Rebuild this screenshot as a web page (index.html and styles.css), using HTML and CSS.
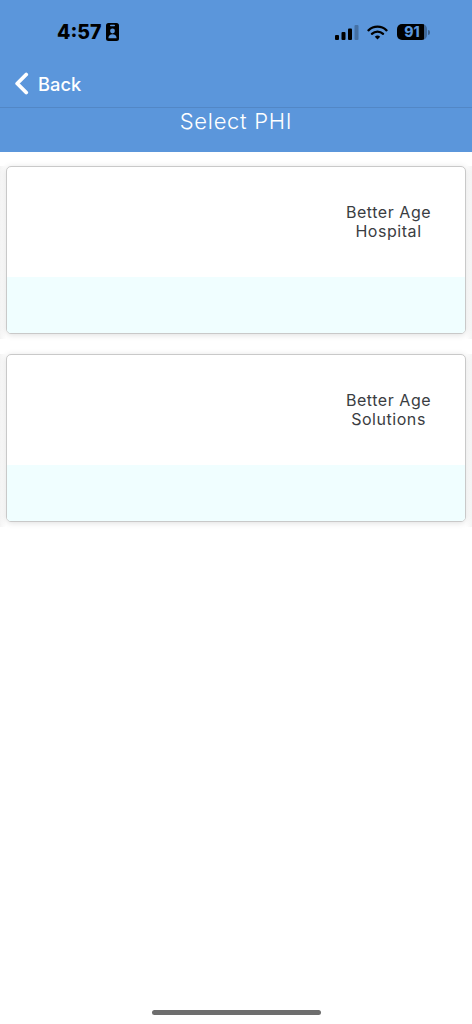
FILE: index.html
```html
<!DOCTYPE html>
<html lang="en">
<head>
  <meta charset="UTF-8">
  <meta name="viewport" content="width=device-width, initial-scale=1.0">
  <title>Select PHI</title>
  <link rel="stylesheet" href="styles.css">
</head>
<body>
  <div class="page">

    <!-- Blue header -->
    <header class="header">
      <div class="status-bar">
        <div class="status-left">
          <span class="clock">4:57</span>
          <svg class="badge-icon" width="13" height="18" viewBox="0 0 13 18">
            <rect x="0" y="0" width="13" height="18" rx="2.5" fill="#000"/>
            <rect x="4" y="1.8" width="5" height="1.5" rx="0.7" fill="#5b96db"/>
            <circle cx="6.5" cy="8" r="2.4" fill="#5b96db"/>
            <path d="M2.4 15.2c0-2.6 1.8-3.9 4.1-3.9s4.1 1.3 4.1 3.9z" fill="#5b96db"/>
          </svg>
        </div>
        <div class="status-right">
          <svg width="24" height="15" viewBox="0 0 24 15">
            <rect x="0" y="10" width="4" height="5" rx="1" fill="#000"/>
            <rect x="6.5" y="7" width="4" height="8" rx="1" fill="#000"/>
            <rect x="13" y="3.5" width="4" height="11.5" rx="1" fill="#000"/>
            <rect x="19.5" y="0" width="4" height="15" rx="1" fill="#000" opacity="0.25"/>
          </svg>
          <svg class="wifi-icon" width="21" height="15" viewBox="0 0 21 15">
            <path d="M1.5 5.3a13 13 0 0 1 18 0" fill="none" stroke="#000" stroke-width="2.3" stroke-linecap="round"/>
            <path d="M4.9 8.8a8.2 8.2 0 0 1 11.2 0" fill="none" stroke="#000" stroke-width="2.3" stroke-linecap="round"/>
            <path d="M7.8 11.7l2.7 2.9 2.7-2.9a3.9 3.9 0 0 0-5.4 0z" fill="#000"/>
          </svg>
          <div class="battery">
            <span class="battery-level">91</span>
            <span class="battery-cap"></span>
          </div>
        </div>
      </div>

      <div class="nav-row">
        <svg class="back-icon" width="15" height="23" viewBox="0 0 15 23">
          <path d="M12.2 2.5L3.2 11.5l9 9" fill="none" stroke="#fff" stroke-width="3.8" stroke-linecap="round" stroke-linejoin="round"/>
        </svg>
        <span class="back-label">Back</span>
      </div>

      <h1 class="title">Select PHI</h1>
    </header>

    <!-- Organisation cards -->
    <main class="card-list">
      <div class="card-wrap">
        <div class="card">
          <div class="card-top">
            <p class="card-name">Better Age<br>Hospital</p>
          </div>
          <div class="card-bottom"></div>
        </div>
      </div>
      <div class="card-wrap">
        <div class="card">
          <div class="card-top">
            <p class="card-name">Better Age<br>Solutions</p>
          </div>
          <div class="card-bottom"></div>
        </div>
      </div>
    </main>

    <div class="home-indicator"></div>
  </div>
</body>
</html>
```

FILE: styles.css
```css
/* General styles for the page */
body {
  margin: 0;
  background-color: #fff;
  font-family: Inter, "Liberation Sans", sans-serif;
}

.page {
  display: flex;
  flex-direction: column;
  height: 1024px;
  overflow: hidden;
}

/* Header */
.header {
  height: 152px;
  background-color: #5b96db;
  box-sizing: border-box;
}

.status-bar {
  display: flex;
  justify-content: space-between;
  align-items: center;
  height: 64px;
  padding: 0 42px 0 57px;
}

.status-left {
  display: flex;
  align-items: center;
  gap: 5px;
}

.clock {
  font-size: 19.5px;
  font-weight: 800;
  color: #000;
}

.status-right {
  display: flex;
  align-items: center;
  gap: 8px;
}

.wifi-icon {
  margin-right: 1px;
}

.battery {
  display: flex;
  align-items: center;
  gap: 1px;
}

.battery-level {
  width: 30px;
  height: 16px;
  border-radius: 5px;
  background: linear-gradient(to right, #000 90%, rgba(0, 0, 0, 0.3) 90%);
  color: #5b96db;
  font-size: 14px;
  font-weight: 800;
  line-height: 16px;
  text-align: center;
}

.battery-cap {
  width: 2px;
  height: 5px;
  border-radius: 0 2px 2px 0;
  background-color: rgba(0, 0, 0, 0.35);
}

.nav-row {
  display: flex;
  align-items: center;
  gap: 9px;
  height: 39px;
  padding: 0 0 4px 14px;
  border-bottom: 1px solid #5287c6;
}

.back-label {
  color: #fff;
  font-size: 18.3px;
  font-weight: 500;
}

.title {
  margin: 0;
  color: #fff;
  font-size: 22px;
  font-weight: 300;
  line-height: 27px;
  text-align: center;
  letter-spacing: 0.7px;
}

/* Cards */
.card-list {
  display: flex;
  flex-direction: column;
  gap: 15px;
  padding-top: 14px;
}

/* each card sits on a faint grey strip */
.card-wrap {
  padding: 0 6px 5px;
  background: linear-gradient(to right, #f4f4f4, #fff 6px, #fff calc(100% - 6px), #f4f4f4);
}

.card {
  height: 166px;
  border: 1px solid #c9c9c9;
  border-radius: 5px;
  background-color: #fff;
  box-shadow: 0 1px 6px rgba(0, 0, 0, 0.13);
  overflow: hidden;
}

.card-top {
  display: flex;
  justify-content: flex-end;
  height: 110px;
}

.card-name {
  width: 153px;
  margin: 36px 0 0;
  color: #3a3d42;
  font-size: 16px;
  line-height: 19px;
  text-align: center;
  letter-spacing: 0.55px;
}

.card-bottom {
  height: 56px;
  background-color: #f0feff;
}

/* iOS home bar */
.home-indicator {
  align-self: center;
  width: 169px;
  height: 5px;
  margin-top: auto;
  margin-bottom: 9px;
  border-radius: 3px;
  background-color: #6e6e6e;
}
```
